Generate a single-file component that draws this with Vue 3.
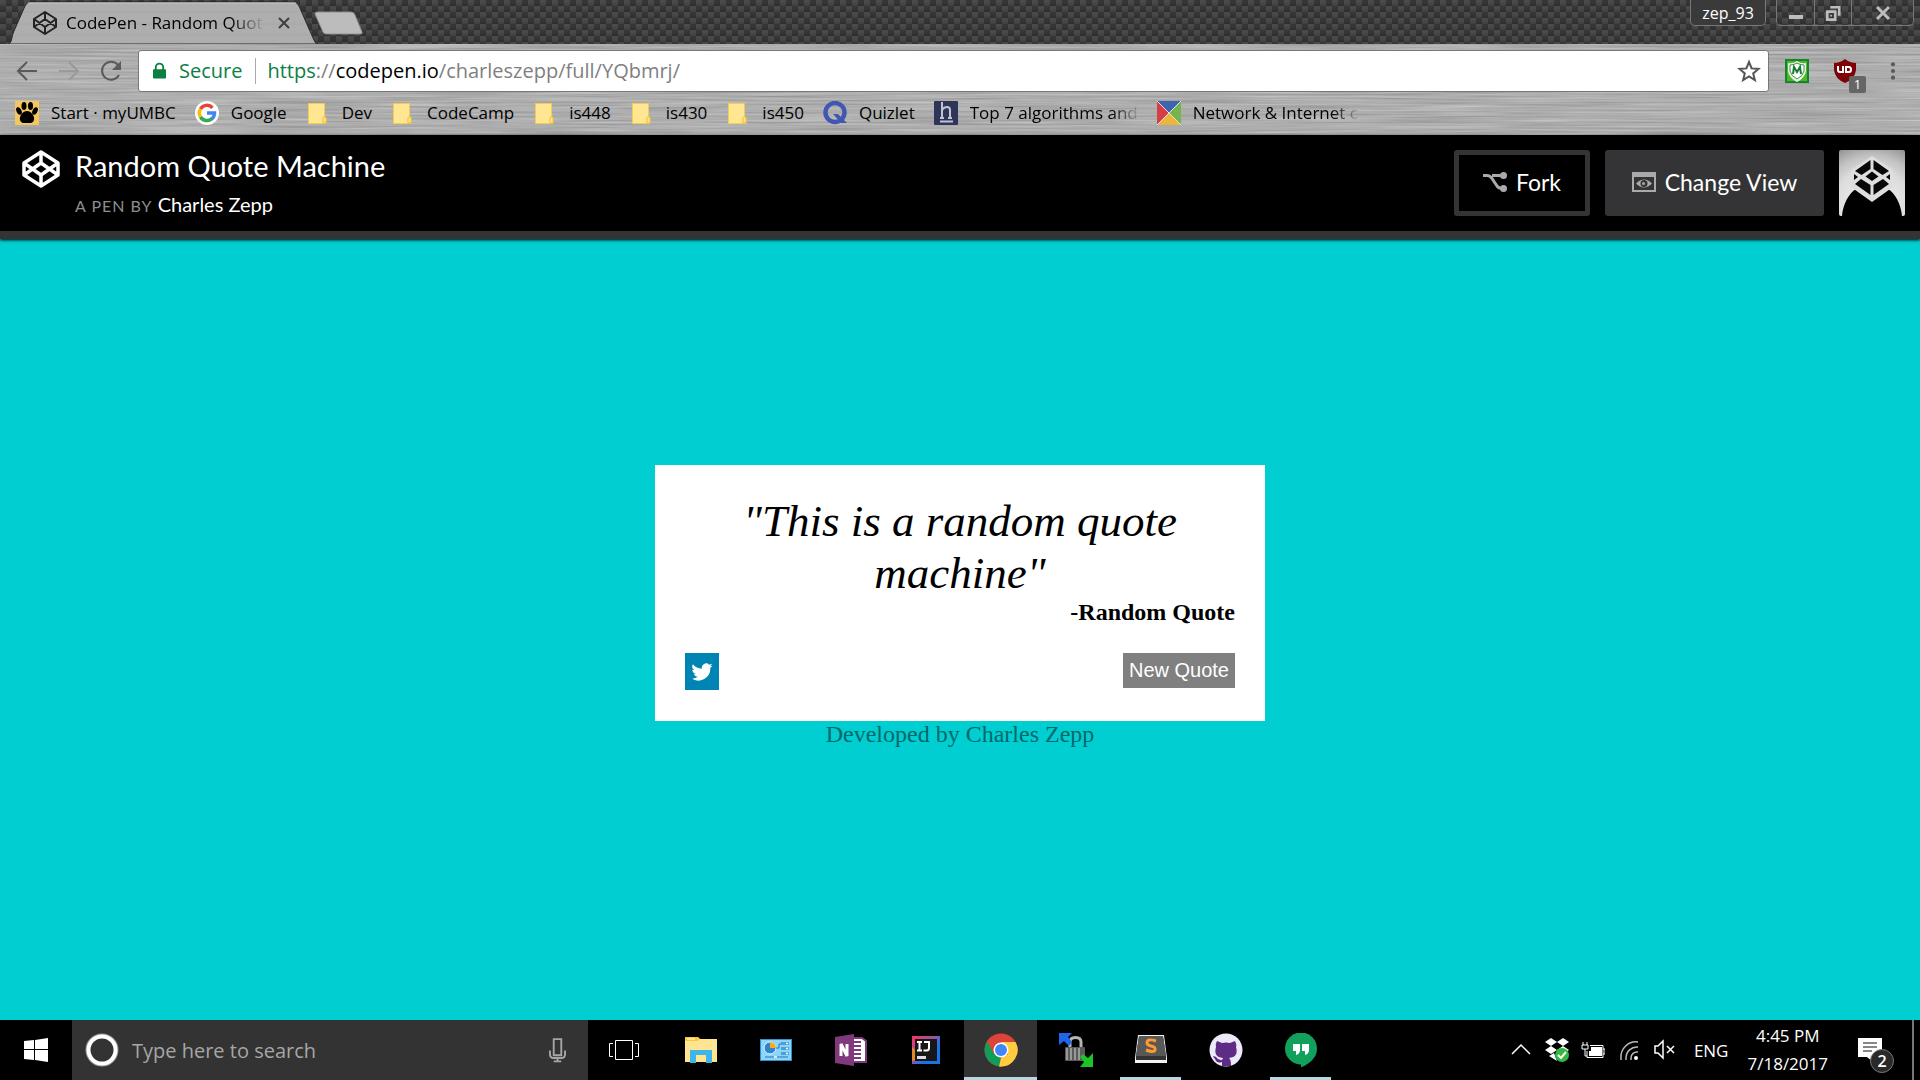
<script setup>
import { ref } from 'vue'

const bookmarks = [
  { icon: 'paw', label: 'Start · myUMBC' },
  { icon: 'google', label: 'Google' },
  { icon: 'folder', label: 'Dev' },
  { icon: 'folder', label: 'CodeCamp' },
  { icon: 'folder', label: 'is448' },
  { icon: 'folder', label: 'is430' },
  { icon: 'folder', label: 'is450' },
  { icon: 'quizlet', label: 'Quizlet' },
  { icon: 'h', label: 'Top 7 algorithms and', long: true },
  { icon: 'network', label: 'Network & Internet c', long: true }
]

const apps = [
  { id: 'explorer', name: 'File Explorer' },
  { id: 'panel', name: 'Control Panel' },
  { id: 'onenote', name: 'OneNote' },
  { id: 'intellij', name: 'IntelliJ IDEA' },
  { id: 'chrome', name: 'Google Chrome', state: 'active' },
  { id: 'winscp', name: 'WinSCP' },
  { id: 'sublime', name: 'Sublime Text', state: 'running' },
  { id: 'github', name: 'GitHub Desktop' },
  { id: 'hangouts', name: 'Hangouts', state: 'running' }
]

const search = ref('')
</script>

<template>
  <div class="screen">
    <header class="browser">
      <div class="tabstrip">
        <div class="tab">
          <svg class="tab-shape" viewBox="0 0 310 44" preserveAspectRatio="none">
            <path d="M0 44C4 44 3 38 6 31L17 6Q19 2 22 2H286Q289 2 291 6L305 38Q307 44 310 44Z" fill="#aeaeae" stroke="#2b2b2b" />
            <path d="M20 3H288" stroke="#c9c9c9" />
            <path d="M16 12H292M12 24H298M7 35H302" stroke="#a6a6a6" />
          </svg>
          <svg class="tab-icon" viewBox="0 0 24 24" fill="none" stroke="#222" stroke-width="2" stroke-linejoin="round">
            <path d="M12 1L23 8V16L12 23L1 16V8ZM12 1V8M12 16V23M1 8L12 16L23 8M1 16L12 8L23 16" />
          </svg>
          <span class="tab-title"><span class="faded">CodePen - Random Quot</span></span>
          <button class="tab-close" aria-label="Close tab">
            <svg viewBox="0 0 12 12" stroke="#3e3e3e" stroke-width="2"><path d="M1 1L11 11M11 1L1 11" /></svg>
          </button>
        </div>
        <button class="new-tab" aria-label="New tab">
          <svg viewBox="0 0 50 24"><path d="M3 1H37Q40 1 41 4L48 21Q49 23 46 23H12Q10 23 9 21L1 3Q1 1 3 1Z" fill="#bcbcbc" stroke="#8e8e8e" /></svg>
        </button>
        <button class="profile">zep_93</button>
        <div class="window-controls">
          <button aria-label="Minimize"><svg viewBox="0 0 16 18"><path d="M1 11H15V15H1Z" fill="#bdbdbd" /></svg></button>
          <button aria-label="Restore"><svg viewBox="0 0 18 18" fill="none" stroke="#bdbdbd" stroke-width="3"><path d="M2.500 7.500H11.500V16.500H2.500ZM6 2.500H16V12" /><path d="M6 12H8" stroke-width="2" /></svg></button>
          <button aria-label="Close"><svg viewBox="0 0 16 18" stroke="#bdbdbd" stroke-width="3"><path d="M2 3L14 15M14 3L2 15" /></svg></button>
        </div>
      </div>

      <div class="chrome-bars">
        <svg class="metal" aria-hidden="true">
          <filter id="brushed" x="0" y="0" width="100%" height="100%" color-interpolation-filters="sRGB">
            <feTurbulence type="fractalNoise" baseFrequency="0.008 0.5" numOctaves="3" seed="4" />
            <feColorMatrix values="0.240 0 0 0 0.560  0.240 0 0 0 0.560  0.240 0 0 0 0.560  0 0 0 0 1" />
          </filter>
          <rect width="100%" height="100%" filter="url(#brushed)" />
        </svg>
        <div class="toolbar">
          <button class="nav" aria-label="Back"><svg viewBox="0 0 24 24" fill="none" stroke="#5a5a5a" stroke-width="2"><path d="M22 12H3M12 3L3 12L12 21" /></svg></button>
          <button class="nav" aria-label="Forward"><svg viewBox="0 0 24 24" fill="none" stroke="#999" stroke-width="2"><path d="M2 12H21M12 3L21 12L12 21" /></svg></button>
          <button class="nav" aria-label="Reload"><svg viewBox="0 0 24 24" fill="none" stroke="#5a5a5a" stroke-width="2"><path d="M20 16A9 9 0 1 1 19 6" /><path d="M22 2V11H13Z" fill="#5a5a5a" stroke="none" /></svg></button>
          <div class="omnibox">
            <svg class="lock" viewBox="0 0 14 18"><path d="M1 7H13Q14 7 14 8V16Q14 17 13 17H1Q0 17 0 16V8Q0 7 1 7Z" fill="#0b8043" /><path d="M3 8V5A4 4 0 0 1 11 5V8" fill="none" stroke="#0b8043" stroke-width="2" /></svg>
            <span class="secure">Secure</span>
            <span class="url"><span class="scheme">https</span>://<span class="host">codepen.io</span>/charleszepp/full/YQbmrj/</span>
            <button class="star" aria-label="Bookmark this page"><svg viewBox="0 0 24 24" fill="none" stroke="#555" stroke-width="2"><path d="M12 3L14.600 9.400L21.500 9.900L16.200 14.400L17.900 21L12 17.400L6.100 21L7.800 14.400L2.500 9.900L9.400 9.400Z" /></svg></button>
          </div>
          <button class="extension" aria-label="McAfee">
            <svg viewBox="0 0 24 24"><rect x="1" y="1" width="22" height="22" fill="#4fb72a" stroke="#17852b" stroke-width="2" /><path d="M3 4Q8 5 12 2Q16 5 21 4V12Q20 19 12 23Q4 19 3 12Z" fill="#e9f5e5" /><path d="M5 6Q9 6 12 4Q15 6 19 6V12Q18 17 12 20Q6 17 5 12Z" fill="#fff" stroke="#3c8e42" /><path d="M8 15L9 8L12 13L15 8L16 15" fill="none" stroke="#187b33" stroke-width="2" /></svg>
          </button>
          <button class="extension ublock" aria-label="uBlock Origin">
            <svg viewBox="0 0 24 24"><path d="M1 4Q7 4 12 0Q17 4 23 4V11Q22 20 12 24Q2 20 1 11Z" fill="#800008" /><path d="M5 7V11Q5 13 7 13H10V7M13 13V8H16Q18 8 18 10.500Q18 13 16 13H12" fill="none" stroke="#fff" stroke-width="2" /></svg>
            <span class="badge">1</span>
          </button>
          <button class="menu" aria-label="Menu"><svg viewBox="0 0 6 24" fill="#5a5a5a"><circle cx="3" cy="4" r="2.500" /><circle cx="3" cy="12" r="2.500" /><circle cx="3" cy="20" r="2.500" /></svg></button>
        </div>

        <nav class="bookmarks">
          <a v-for="item in bookmarks" :key="item.label" href="#" class="bookmark">
            <svg v-if="item.icon === 'paw'" viewBox="0 0 24 24"><rect width="24" height="24" fill="#f4c75c" /><ellipse cx="9" cy="5" rx="2.500" ry="4" /><ellipse cx="15.500" cy="5" rx="2.500" ry="4" /><ellipse cx="4" cy="10" rx="2.500" ry="4" transform="rotate(-25 4 10)" /><ellipse cx="20" cy="10" rx="2.500" ry="4" transform="rotate(25 20 10)" /><path d="M12 10C16 10 20 15 19 19C18 23 14 22 12 22S6 23 5 19C4 15 8 10 12 10Z" /></svg>
            <svg v-else-if="item.icon === 'google'" viewBox="0 0 24 24"><circle cx="12" cy="12" r="12" fill="#fff" /><g fill="none" stroke-width="3.500"><path d="M5.500 8A7.500 7.500 0 0 1 17.500 6.800" stroke="#ea4335" /><path d="M5.500 8A7.500 7.500 0 0 0 5.500 16" stroke="#fbbc05" /><path d="M5.500 16A7.500 7.500 0 0 0 17 17.500" stroke="#34a853" /><path d="M12 12H19.500A7.500 7.500 0 0 1 16.500 18" stroke="#4285f4" /></g></svg>
            <svg v-else-if="item.icon === 'folder'" viewBox="0 0 24 24"><path d="M2.500 2.500H18.500V16L20 17V22.500H2.500Z" fill="#ffe693" stroke="#f2cc55" /><path d="M17 22V17Q17 16 18 16H20V22Z" fill="#ffe693" stroke="#eabf3a" /></svg>
            <svg v-else-if="item.icon === 'quizlet'" viewBox="0 0 24 24"><circle cx="12" cy="11.500" r="9.500" fill="none" stroke="#4257b2" stroke-width="4.500" /><path d="M10 13H15L24 22H18Z" fill="#4257b2" /></svg>
            <svg v-else-if="item.icon === 'h'" viewBox="0 0 24 24"><rect width="24" height="24" rx="1" fill="#2e3558" /><path d="M8 1V16M8 9Q10 6 13 6Q16 6 16 9V16M6 17H10M14 17H18M6 20.500H19" fill="none" stroke="#bfc3d2" stroke-width="2" /></svg>
            <svg v-else viewBox="0 0 24 24"><path d="M0 0H24L12 12Z" fill="#3d64b1" /><path d="M24 0V24L12 12Z" fill="#76b54d" /><path d="M24 24H0L12 12Z" fill="#ecb53c" /><path d="M0 24V0L12 12Z" fill="#d53e44" /><path d="M0 0L24 24M24 0L0 24" stroke="#e8e0d8" /></svg>
            <span :class="{ faded: item.long }">{{ item.label }}</span>
          </a>
        </nav>
      </div>
    </header>

    <section class="pen-header">
      <svg class="pen-logo" viewBox="0 0 38 38" fill="none" stroke="#fff" stroke-width="3.500" stroke-linejoin="round">
        <path d="M19 2L36 13V25L19 36L2 25V13ZM19 2V13M19 25V36M2 13L19 25L36 13M2 25L19 13L36 25" />
      </svg>
      <div class="pen-titles">
        <h1>Random Quote Machine</h1>
        <p><span class="by">A PEN BY</span> <a href="#">Charles Zepp</a></p>
      </div>
      <button class="pen-button fork">
        <svg viewBox="0 0 24 20" fill="none" stroke="#aaa" stroke-width="3"><path d="M0 3.500H4Q7 3.500 9 6.500L14 14Q15.500 16.500 20 16.500M9 3.500H20" /><g fill="#aaa" stroke="none"><circle cx="20.500" cy="3.500" r="3.500" /><circle cx="20.500" cy="16.500" r="3.500" /></g></svg>
        Fork
      </button>
      <button class="pen-button view">
        <svg viewBox="0 0 24 20"><path d="M0 0H24V20H0ZM2 5V18H22V5Z" fill="#aaa" fill-rule="evenodd" /><path d="M4 11.500Q12 3.500 20 11.500Q12 19.500 4 11.500Z" fill="#aaa" /><circle cx="12" cy="11.500" r="3.500" fill="#343436" /><circle cx="11.500" cy="11.500" r="1.500" fill="#aaa" /></svg>
        Change View
      </button>
      <a href="#" class="avatar" aria-label="Profile">
        <svg viewBox="0 0 66 66">
          <defs><radialGradient id="glow" cx="50%" cy="85%" r="95%"><stop offset="0" stop-color="#f5f5f5" /><stop offset="60%" stop-color="#dcdcdc" /><stop offset="80%" stop-color="#c2c2c2" /><stop offset="100%" stop-color="#999" /></radialGradient></defs>
          <rect width="66" height="66" rx="2" fill="url(#glow)" />
          <path d="M3 66C4 54 10 43 17 39L33 50L49 39C56 43 62 54 63 66Z" fill="#000" />
          <path d="M33 6L54 20V37L33 52L12 37V20Z" fill="#dedede" />
          <path d="M31.500 10V19L22.500 25L16 21ZM34.500 10L50 21L43.500 25L34.500 19ZM33 21.500L39.500 26.500L33 31L26.500 26.500ZM15 24L19 27L15 30ZM51 24L47 27L51 30ZM22 29L31.500 35V45L16 34ZM44 29L34.500 35V45L50 34Z" fill="#080808" />
        </svg>
      </a>
    </section>

    <main class="page">
      <article class="card">
        <blockquote>"This is a random quote machine"</blockquote>
        <p class="author">-Random Quote</p>
        <div class="actions">
          <a href="#" class="tweet" aria-label="Tweet this quote">
            <svg viewBox="0 0 24 24" fill="#fff"><path d="M23.500 4.900a9.500 9.500 0 0 1-2.700.7 4.700 4.700 0 0 0 2.100-2.600 9.400 9.400 0 0 1-3 1.100 4.700 4.700 0 0 0-8 4.300A13.400 13.400 0 0 1 2.100 3.500a4.700 4.700 0 0 0 1.500 6.300 4.700 4.700 0 0 1-2.200-.6 4.700 4.700 0 0 0 3.800 4.700 4.700 4.700 0 0 1-2.100.1 4.700 4.700 0 0 0 4.400 3.300A9.500 9.500 0 0 1 .5 19.200a13.400 13.400 0 0 0 20.600-11.900 9.600 9.600 0 0 0 2.400-2.400z" /></svg>
          </a>
          <button class="new-quote">New Quote</button>
        </div>
      </article>
      <p class="credit">Developed by Charles Zepp</p>
    </main>

    <footer class="taskbar">
      <button class="start" aria-label="Start">
        <svg viewBox="0 0 24 24" fill="#fff"><path d="M0 3L10 2V11H0ZM11 2L24 0V11H11ZM0 12H10V22L0 21ZM11 12H24V24L11 22Z" /></svg>
      </button>
      <label class="search">
        <svg class="cortana" viewBox="0 0 34 34" fill="none"><circle cx="17" cy="17" r="15.500" stroke="#999" stroke-width="2" /><circle cx="17" cy="17" r="13.500" stroke="#fff" stroke-width="4" /></svg>
        <input v-model="search" type="text" placeholder="Type here to search" aria-label="Type here to search">
        <svg class="mic" viewBox="0 0 18 26" fill="none" stroke="#a6a6a6" stroke-width="2"><path d="M5 1H13V18H5ZM1 13V17Q1 21 5 21H13Q17 21 17 17V13M9 21V25M5 24.500H13" /></svg>
      </label>
      <button class="app task-view" aria-label="Task View">
        <svg viewBox="0 0 34 34" fill="none" stroke="#fff"><path d="M8.500 7.500H25.500V26.500H8.500ZM6 10.500H2.500V23.500H6M28 10.500H31.500V23.500H28" /></svg>
      </button>
      <button v-for="app in apps" :key="app.id" class="app" :class="app.state" :aria-label="app.name">
        <svg v-if="app.id === 'explorer'" viewBox="0 0 34 34"><path d="M1 5Q1 4 2 4H14L16 6H33V29H1Z" fill="#ffe491" /><path d="M1 8V5Q1 4 2 4H14L15 6L14 8Z" fill="#fdc92c" /><path d="M3 6H11" stroke="#fff" /><path d="M6 30V17H28V30H22V22H12V30Z" fill="#3fb5ea" /></svg>
        <svg v-else-if="app.id === 'panel'" viewBox="0 0 34 34"><rect x="1" y="6" width="32" height="22" fill="#2b91d0" /><rect x="2" y="7" width="30" height="20" fill="#8dd4fa" /><circle cx="11" cy="15" r="6" fill="#2e86cf" stroke="#e7f6ff" /><path d="M11 15V9A6 6 0 0 1 17 15Z" fill="#f9ab1e" /><path d="M17 15H20V11H23M6 24H29" fill="none" stroke="#1f78b9" /><path d="M22 9H30V12H22ZM22 14H30V17H22ZM22 19H30V22H22Z" fill="#4c9fd8" /><path d="M27 10.500H29M27 15.500H29M27 20.500H29M15 24H18" stroke="#fff" stroke-width="1.500" /></svg>
        <svg v-else-if="app.id === 'onenote'" viewBox="0 0 34 34"><path d="M18 5H28L32 8V29H18Z" fill="#fff" stroke="#80397b" stroke-width="2" /><path d="M20 9H27M20 13H27M20 17H27M20 21H27M20 25H27M31 14H33M31 21H33" stroke="#80397b" stroke-width="2" /><path d="M1 4L20 1V33L1 30Z" fill="#80397b" /><path d="M7 23V11L13 23V11" fill="none" stroke="#fff" stroke-width="3" /></svg>
        <svg v-else-if="app.id === 'intellij'" viewBox="0 0 34 34"><defs><linearGradient id="idea" x2="1" y2="1"><stop offset="0" stop-color="#ff315d" /><stop offset="45%" stop-color="#8a5aa8" /><stop offset="65%" stop-color="#1973e8" /></linearGradient></defs><rect x="3" y="3" width="28" height="28" fill="url(#idea)" /><path d="M3 14L6 17V27L3 28Z" fill="#e08b28" /><rect x="6" y="6" width="22" height="22" fill="#171717" /><path d="M8 9H13M10.500 9V17M8 17.500H13M15 9H20V15Q20 17.500 17.500 17.500H14.500" fill="none" stroke="#fff" stroke-width="2" /><path d="M8 23H17V26H8Z" fill="#ddd" /></svg>
        <svg v-else-if="app.id === 'chrome'" viewBox="0 0 34 34"><circle cx="17" cy="17" r="16.500" fill="#db4437" /><path d="M17 9H31.500A16.500 16.500 0 0 1 16 33.500L24 21Z" fill="#ffcd40" /><path d="M3 8.500L10 21L17 25L16 33.500A16.500 16.500 0 0 1 3 8.500Z" fill="#0f9d58" /><path d="M17 25L24 21L17 33.500H15Z" fill="#ffcd40" /><circle cx="17" cy="17" r="7.500" fill="#fff" /><circle cx="17" cy="17" r="6" fill="#4285f4" /></svg>
        <svg v-else-if="app.id === 'winscp'" viewBox="0 0 34 34"><path d="M11 14V9Q11 4.500 16.500 4.500T22 9V14" fill="none" stroke="#b5b5b5" stroke-width="3" /><rect x="6" y="14" width="20" height="14" rx="1" fill="#5a5a5a" /><path d="M8 15V27M12 15V27M16 15V27M20 15V27" stroke="#999" stroke-width="2" /><path d="M0 0H13L9 4L13 9L10 13L5 8L0 12Z" fill="#1e67ea" /><path d="M21 24L24 21L29 25L34 20V34H21L25 29Z" fill="#1cc425" /></svg>
        <svg v-else-if="app.id === 'sublime'" viewBox="0 0 34 34"><path d="M4 2H30L33 25V30H1V25Z" fill="#f4f4f4" /><path d="M5 3H29L32 23V27H2V23Z" fill="#333" /><path d="M5 3H29L32 23H2Z" fill="#585858" /><path d="M22 8Q13 5 13 10Q13 12 17 13Q22 14 21 17Q20 20 12 17" fill="none" stroke="#ff9a2f" stroke-width="3" /></svg>
        <svg v-else-if="app.id === 'github'" viewBox="0 0 34 34"><circle cx="17" cy="17" r="16.500" fill="#eceaf8" /><path d="M8 8L13 10Q17 9 21 10L26 8Q28 12 27 14Q30 24 20 25Q22 26 22 33H13V29Q8 31 6 26Q4 24 4 23Q7 23 9 26Q11 27 13 27L14 25Q4 24 7 14Q6 11 8 8Z" fill="#5e2b85" /></svg>
        <svg v-else viewBox="0 0 34 34"><circle cx="17" cy="15.500" r="16" fill="#12a05d" /><path d="M17 28L29 26Q25 31 17 34.500Z" fill="#12a05d" /><path d="M9 11H16V17Q16 21 12 22V18H9ZM18 11H25V17Q25 21 21 22V18H18Z" fill="#fff" /></svg>
      </button>

      <div class="tray">
        <svg class="tray-icon" viewBox="0 0 24 26" fill="none" stroke="#fff" stroke-width="1.500"><path d="M3 17L12 8L21 17" /></svg>
        <svg class="tray-icon" viewBox="0 0 24 26"><path d="M6 1L12 5L6 9L0 5ZM18 1L24 5L18 9L12 5ZM6 9L12 13L6 17L0 13ZM18 9L24 13L18 17L12 13ZM4 19L12 24L9 16Z" fill="#fff" /><circle cx="17" cy="18" r="7" fill="#35b643" /><path d="M13 18L16 21L21 15" fill="none" stroke="#fff" stroke-width="2" /></svg>
        <svg class="tray-icon" viewBox="0 0 24 26" fill="none" stroke="#fff"><path d="M1 8V12H7V8ZM2 5V8M6 5V8M4 12V19H6" /><path d="M9 8.500H22V20.500H6V14M22 12H24V17H22" /><path d="M10 10H21V19H8V14H10Z" fill="#fff" stroke="none" /></svg>
        <svg class="tray-icon" viewBox="0 0 24 26" fill="none" stroke="#bbb" stroke-width="1.500"><path d="M4 23V21A15 15 0 0 1 21 5M9 23V21A11 11 0 0 1 21 10M14 23V21A6 6 0 0 1 21 15" /><circle cx="19" cy="21" r="2" fill="#fff" stroke="none" /></svg>
        <svg class="tray-icon" viewBox="0 0 24 26" fill="none" stroke="#fff" stroke-width="1.500"><path d="M2 9H5L10 4V21L5 16H2ZM14 9L21 16M21 9L14 16" /></svg>
        <span class="lang">ENG</span>
        <div class="clock"><time>4:45 PM</time><time>7/18/2017</time></div>
        <button class="notifications" aria-label="Notifications">
          <svg viewBox="0 0 24 24"><path d="M0 0H24V19H15V24L9 19H0Z" fill="#fff" /><path d="M5 5H19M5 9H19M5 13H14" stroke="#111" /></svg>
          <span class="count">2</span>
        </button>
      </div>
    </footer>
  </div>
</template>

<style>
body {
  margin: 0;
}
</style>

<style scoped>
.screen {
  display: flex;
  flex-direction: column;
  min-height: 100vh;
  background: #00ced1;
  font-family: "Open Sans", "Noto Sans", sans-serif;
}

h1, p, blockquote {
  margin: 0;
}

button {
  padding: 0;
  border: 0;
  background: none;
  font-family: inherit;
  color: inherit;
}

svg {
  display: block;
  flex: none;
}

a {
  color: inherit;
  text-decoration: none;
}

.tabstrip {
  display: flex;
  align-items: flex-start;
  height: 44px;
  padding: 0 6px 0 8px;
  background-color: #414141;
  background-image:
    linear-gradient(rgba(0, 0, 0, 0) 33%, rgba(0, 0, 0, 0.15)),
    conic-gradient(#363636 25%, #4a4a4a 0 50%, #363636 0 75%, #4a4a4a 0);
  background-size: 12px 6px, 12px 12px;
}

.tab {
  position: relative;
  display: flex;
  align-items: center;
  width: 310px;
  height: 44px;
  box-sizing: border-box;
  padding: 2px 28px 0 25px;
}

.tab-shape {
  position: absolute;
  inset: 0;
  width: 100%;
  height: 100%;
}

.tab-icon {
  position: relative;
  width: 24px;
  height: 24px;
}

.tab-title {
  position: relative;
  flex: 1;
  margin-left: 9px;
  white-space: nowrap;
  font-size: 17px;
  line-height: 24px;
}

.faded {
  mask-image: linear-gradient(90deg, #000 84%, rgba(0, 0, 0, 0.1));
}

.tab-close {
  position: relative;
}

.tab-close svg {
  width: 12px;
  height: 12px;
}

.new-tab {
  margin: 11px auto 0 -4px;
}

.new-tab svg {
  width: 50px;
  height: 24px;
}

.profile {
  width: 76px;
  height: 26px;
  margin-right: 10px;
  border: 1px solid #777;
  border-top: 0;
  border-radius: 0 0 5px 5px;
  background: #3a3a3a;
  color: #fff;
  font-size: 16px;
  line-height: 26px;
}

.window-controls {
  display: flex;
  height: 26px;
  box-sizing: border-box;
  border: 1px solid #777;
  border-top: 0;
  border-radius: 0 0 5px 5px;
}

.window-controls button {
  display: flex;
  justify-content: center;
  align-items: center;
  width: 37px;
}

.window-controls button + button {
  border-left: 1px solid #777;
}

.window-controls button:last-child {
  width: 62px;
}

.window-controls svg {
  width: 16px;
  height: 18px;
}

.chrome-bars {
  position: relative;
  height: 91px;
  background: #adadad;
}

.metal {
  position: absolute;
  inset: 0;
  width: 100%;
  height: 100%;
}

.toolbar {
  position: relative;
  display: flex;
  align-items: center;
  padding: 6px 24px 0 15px;
}

.nav {
  margin-right: 18px;
}

.nav svg,
.star svg,
.extension svg {
  width: 24px;
  height: 24px;
}

.omnibox {
  display: flex;
  flex: 1;
  align-items: center;
  height: 42px;
  box-sizing: border-box;
  margin-right: 16px;
  margin-left: -3px;
  padding: 0 7px 0 14px;
  border: 1px solid #777;
  border-radius: 3px;
  background: #fff;
  color: #808080;
  font-size: 20px;
  line-height: 26px;
}

.lock {
  width: 13px;
  height: 18px;
}

.secure {
  margin: 0 11px 0 13px;
  padding-right: 13px;
  border-right: 1px solid #aaa;
}

.secure,
.scheme {
  color: #0b8043;
}

.host {
  color: #000;
}

.star {
  margin-left: auto;
}

.ublock {
  position: relative;
  margin-left: 24px;
}

.badge {
  position: absolute;
  top: 17px;
  left: 16px;
  width: 17px;
  border-radius: 2px;
  background: #666;
  color: #fff;
  font-size: 13px;
  line-height: 17px;
}

.menu {
  margin-left: 33px;
}

.menu svg {
  width: 6px;
  height: 20px;
}

.bookmarks {
  position: relative;
  display: flex;
  gap: 19px;
  padding: 9px 15px 0;
}

.bookmark {
  display: flex;
  align-items: center;
  gap: 12px;
  color: #000;
  font-size: 17px;
  line-height: 24px;
  white-space: nowrap;
}

.bookmark svg {
  width: 24px;
  height: 24px;
}

.pen-header {
  position: relative;
  display: flex;
  align-items: flex-start;
  height: 104px;
  box-sizing: border-box;
  padding: 15px 15px 0 22px;
  border-bottom: 8px solid #343436;
  background: #000;
  box-shadow: 0 1px 3px #000;
  color: #fff;
  font-family: Lato, sans-serif;
}

.pen-logo {
  width: 38px;
  height: 38px;
}

.pen-titles {
  margin: 0 auto 0 15px;
}

h1 {
  font-size: 29px;
  font-weight: 400;
  line-height: 32px;
}

.pen-titles p {
  margin-top: 10px;
  font-size: 20px;
  line-height: 24px;
}

.by {
  color: #8e8e90;
  font-size: 16px;
  letter-spacing: 1px;
}

.pen-button {
  display: flex;
  justify-content: center;
  align-items: center;
  gap: 9px;
  height: 66px;
  margin-right: 15px;
  padding-bottom: 2px;
  border: 5px solid #343436;
  border-radius: 3px;
  font-size: 23px;
}

.pen-button svg {
  width: 24px;
  height: 20px;
}

.fork {
  width: 136px;
}

.view {
  width: 219px;
  background: #343436;
}

.avatar svg {
  width: 66px;
  height: 66px;
}

.page {
  flex: 1;
  padding: 226px 20px 20px;
  font-family: "Liberation Serif", serif;
}

.card {
  max-width: 610px;
  box-sizing: border-box;
  margin: 0 auto;
  padding: 30px;
  background: #fff;
  color: #000;
}

blockquote {
  font-size: 45px;
  font-style: italic;
  line-height: 52px;
  text-align: center;
}

.author {
  font-size: 24px;
  font-weight: 700;
  line-height: 27px;
  text-align: right;
}

.actions {
  display: flex;
  justify-content: space-between;
  align-items: flex-start;
  height: 38px;
  margin-top: 27px;
}

.tweet {
  display: flex;
  justify-content: center;
  align-items: center;
  width: 34px;
  height: 37px;
  background: #0084b4;
}

.tweet svg {
  width: 22px;
  height: 22px;
}

.new-quote {
  height: 35px;
  padding: 0 6px;
  background: #808080;
  color: #fff;
  font-family: "Liberation Sans", sans-serif;
  font-size: 20px;
}

.credit {
  color: #00686a;
  font-size: 24px;
  line-height: 27px;
  text-align: center;
}

.taskbar {
  display: flex;
  height: 60px;
  background: #000;
  color: #fff;
}

.start {
  display: flex;
  justify-content: center;
  align-items: center;
  width: 72px;
}

.start svg {
  width: 24px;
  height: 24px;
}

.search {
  display: flex;
  align-items: center;
  width: 516px;
  box-sizing: border-box;
  padding: 0 22px 0 13px;
  background: #333;
}

.cortana {
  width: 34px;
  height: 34px;
}

.search input {
  flex: 1;
  min-width: 0;
  margin-left: 13px;
  padding: 0;
  border: 0;
  outline: 0;
  background: none;
  color: #fff;
  font-family: inherit;
  font-size: 20px;
}

.search input::placeholder {
  color: #a6a6a6;
  opacity: 1;
}

.mic {
  width: 17px;
  height: 25px;
}

.app {
  display: flex;
  justify-content: center;
  align-items: center;
  box-sizing: border-box;
  width: 75px;
}

.app svg {
  width: 34px;
  height: 34px;
}

.task-view {
  padding-right: 4px;
}

.app.active {
  background:
    linear-gradient(#b9d5de, #b9d5de) bottom / 73px 3px no-repeat,
    linear-gradient(#333, #333) center / 73px 100% no-repeat;
}

.app.running {
  background: linear-gradient(#b9d5de, #b9d5de) bottom / 61px 3px no-repeat;
}

.tray {
  display: flex;
  align-items: center;
  gap: 12px;
  margin-left: auto;
  margin-right: 6px;
  padding-right: 18px;
  border-right: 2px solid #777;
}

.tray-icon {
  width: 24px;
  height: 26px;
}

.lang {
  margin-left: 5px;
  font-size: 17px;
}

.clock {
  display: flex;
  flex-direction: column;
  margin-left: 7px;
  font-size: 17px;
  line-height: 28px;
  text-align: center;
}

.notifications {
  position: relative;
  margin-left: 18px;
  padding-right: 12px;
}

.notifications svg {
  width: 24px;
  height: 24px;
}

.count {
  position: absolute;
  top: 11px;
  left: 12px;
  width: 22px;
  border: 1px solid #777;
  border-radius: 50%;
  background: #292929;
  font-size: 16px;
  font-weight: 600;
  line-height: 22px;
}
</style>
